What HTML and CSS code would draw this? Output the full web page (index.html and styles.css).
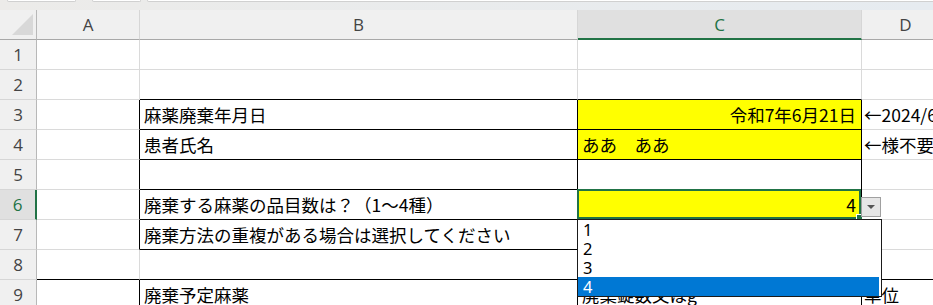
FILE: index.html
```html
<!DOCTYPE html>
<html lang="ja">
<head>
    <meta charset="UTF-8">
    <title>麻薬廃棄</title>
    <link rel="stylesheet" href="styles.css">
</head>
<body>
    <div class="topbar">
        <span class="tab tab-1"></span>
        <span class="tab tab-2"></span>
        <span class="tab tab-3"></span>
    </div>

    <div class="sheet">
        <!-- column headers -->
        <div class="hd corner"><span class="corner-tri"></span></div>
        <div class="hd">A</div>
        <div class="hd">B</div>
        <div class="hd hd-sel">C</div>
        <div class="hd">D</div>

        <!-- row 1 -->
        <div class="rh">1</div>
        <div class="c"></div>
        <div class="c"></div>
        <div class="c"></div>
        <div class="c"></div>

        <!-- row 2 -->
        <div class="rh">2</div>
        <div class="c"></div>
        <div class="c bb"></div>
        <div class="c bb"></div>
        <div class="c"></div>

        <!-- row 3 -->
        <div class="rh">3</div>
        <div class="c br"></div>
        <div class="c br bb">麻薬廃棄年月日</div>
        <div class="c br bb yel right">令和7年6月21日</div>
        <div class="c note">←2024/6/21のように入力</div>

        <!-- row 4 -->
        <div class="rh">4</div>
        <div class="c br"></div>
        <div class="c br bb">患者氏名</div>
        <div class="c br bb yel">ああ　ああ</div>
        <div class="c note">←様不要</div>

        <!-- row 5 -->
        <div class="rh">5</div>
        <div class="c br"></div>
        <div class="c br bb"></div>
        <div class="c br bb"></div>
        <div class="c"></div>

        <!-- row 6 -->
        <div class="rh rh-sel">6</div>
        <div class="c br"></div>
        <div class="c br bb">廃棄する麻薬の品目数は？（1～4種）</div>
        <div class="c br bb yel right active">
            4
            <span class="sel-frame"><span class="handle"></span></span>
            <span class="dd-btn"><span class="dd-arrow"></span></span>
            <ul class="dd-list">
                <li>1</li>
                <li>2</li>
                <li>3</li>
                <li class="hl">4</li>
            </ul>
        </div>
        <div class="c"></div>

        <!-- row 7 -->
        <div class="rh">7</div>
        <div class="c br"></div>
        <div class="c br bb">廃棄方法の重複がある場合は選択してください</div>
        <div class="c br bb"></div>
        <div class="c"></div>

        <!-- row 8 -->
        <div class="rh">8</div>
        <div class="c bb"></div>
        <div class="c bb"></div>
        <div class="c bb"></div>
        <div class="c bb"></div>

        <!-- row 9 -->
        <div class="rh">9</div>
        <div class="c br"></div>
        <div class="c br">廃棄予定麻薬</div>
        <div class="c br">廃棄錠数又はg</div>
        <div class="c note">単位</div>
    </div>
</body>
</html>
```

FILE: styles.css
```css
body {
    margin: 0;
    background: #fff;
    overflow: hidden;
    font-family: "Noto Sans CJK JP", "Noto Sans", sans-serif;
    color: #000;
}

.topbar {
    height: 10px;
    background: linear-gradient(to right, #ecebe9, #e6ebf0);
    position: relative;
}
.tab {
    position: absolute;
    top: 0;
    height: 1px;
    background: #fff;
    border: 1px solid #d0d0d0;
    border-top: none;
    border-radius: 0 0 3px 3px;
}
.tab-1 { left: 7px; width: 67px; }
.tab-2 { left: 92px; width: 47px; }
.tab-3 { left: 147px; width: 800px; }

.sheet {
    display: grid;
    grid-template-columns: 37px 103px 438px 284px 88px 40px;
    grid-auto-rows: 30px;
    width: 990px;
}
.sheet > div {
    box-sizing: border-box;
    border-right: 1px solid #dadada;
    border-bottom: 1px solid #dadada;
}

.hd {
    background: #f0f0f0;
    color: #444;
    font-family: "Open Sans", "Noto Sans", sans-serif;
    font-size: 17px;
    display: flex;
    align-items: center;
    justify-content: center;
    border-right-color: #d6d6d6 !important;
    border-bottom-color: #a8a8a8 !important;
}
.hd-sel {
    background: #e0e0e0;
    color: #217346;
    border-bottom: 2px solid #217346 !important;
}
.corner {
    position: relative;
    border-right-color: #b8b8b8 !important;
}
.corner-tri {
    position: absolute;
    right: 3px;
    bottom: 4px;
    width: 0;
    height: 0;
    border-left: 21px solid transparent;
    border-bottom: 21px solid #d8d8d8;
}

.rh {
    grid-column: 1;
    background: #f0f0f0;
    color: #444;
    font-family: "Open Sans", "Noto Sans", sans-serif;
    font-size: 17px;
    display: flex;
    align-items: center;
    justify-content: center;
    border-right-color: #b8b8b8 !important;
    border-bottom-color: #d6d6d6 !important;
}
.rh-sel {
    background: #e0e0e0;
    color: #217346;
    border-right: 2px solid #217346 !important;
}

.c {
    font-size: 17.5px;
    line-height: 29px;
    padding: 0 5px 0 4px;
    white-space: nowrap;
    position: relative;
}
.bb { border-bottom-color: #000 !important; }
.br { border-right-color: #000 !important; }
.yel { background: #ffff00; }
.right { text-align: right; }
.note { overflow: visible; padding-left: 2px; }

.active { z-index: 2; }
.sel-frame {
    position: absolute;
    top: -1px;
    left: -1px;
    right: 0;
    bottom: 0;
    border: 2px solid #217346;
}
.handle {
    position: absolute;
    right: -4px;
    bottom: -4px;
    width: 5px;
    height: 5px;
    background: #217346;
    border: 1px solid #fff;
}

.dd-btn {
    position: absolute;
    left: 100%;
    top: 7px;
    width: 20px;
    height: 20px;
    box-sizing: border-box;
    background: #e6e6e6;
    border: 1px solid #a0a0a0;
    display: flex;
    align-items: center;
    justify-content: center;
}
.dd-arrow {
    width: 0;
    height: 0;
    border-left: 4px solid transparent;
    border-right: 4px solid transparent;
    border-top: 4px solid #555;
}

.dd-list {
    position: absolute;
    left: -1px;
    top: 29px;
    width: 305px;
    box-sizing: border-box;
    margin: 0;
    padding: 0 2px 0 0;
    list-style: none;
    background: #fff;
    border: 1px solid #1a1a1a;
    text-align: left;
    z-index: 3;
}
.dd-list li {
    height: 19px;
    line-height: 19px;
    padding-left: 5px;
    font-family: "Noto Sans", sans-serif;
    font-size: 16.5px;
    color: #000;
}
.dd-list li.hl {
    background: #0078d4;
    color: #fff;
}
```
